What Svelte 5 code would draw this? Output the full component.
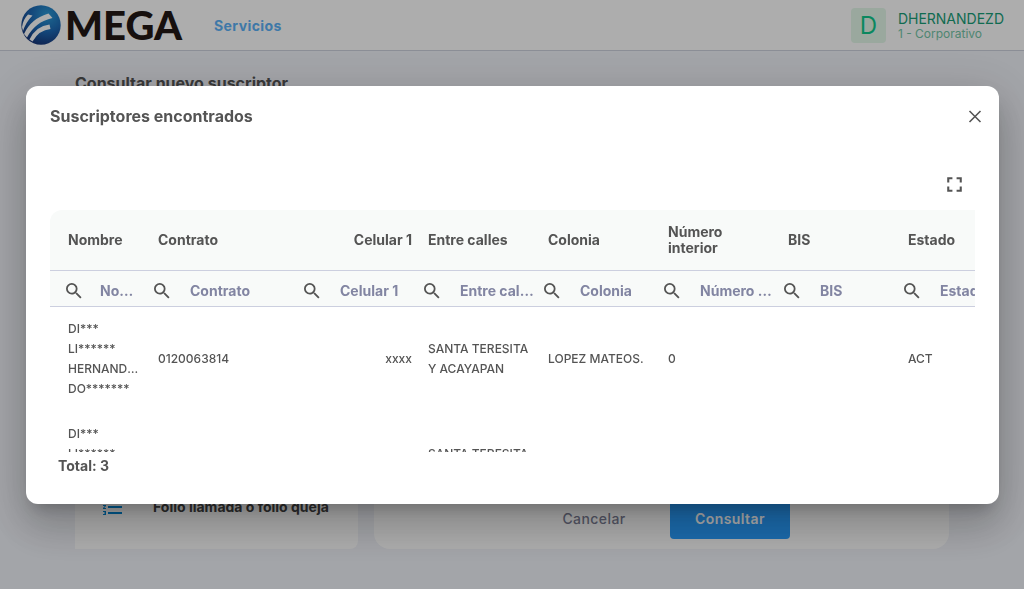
<script>
  const columns = [
    { key: 'nombre', label: 'Nombre', width: 100 },
    { key: 'contrato', label: 'Contrato', width: 150 },
    { key: 'celular', label: 'Celular 1', width: 120, right: true },
    { key: 'calles', label: 'Entre calles', width: 120 },
    { key: 'colonia', label: 'Colonia', width: 120 },
    { key: 'numero', label: 'Número interior', width: 120 },
    { key: 'bis', label: 'BIS', width: 120 },
    { key: 'estado', label: 'Estado', width: 120 }
  ];

  const rows = [
    {
      nombre: ['DI***', 'LI******', 'HERNANDEZ', 'DO*******'],
      contrato: ['0120063814'],
      celular: ['xxxx'],
      calles: ['SANTA TERESITA', 'Y ACAYAPAN'],
      colonia: ['LOPEZ MATEOS.'],
      numero: ['0'],
      bis: [],
      estado: ['ACT']
    },
    {
      nombre: ['DI***', 'LI******', 'HERNANDEZ', 'DO*******'],
      contrato: ['0120063814'],
      celular: ['xxxx'],
      calles: ['SANTA TERESITA', 'Y ACAYAPAN'],
      colonia: ['LOPEZ MATEOS.'],
      numero: ['0'],
      bis: [],
      estado: ['ACT']
    }
  ];
</script>

<div class="page">
  <header>
    <div class="brand">
      <svg viewBox="0 0 40 40" width="40" height="40" aria-hidden="true">
        <defs>
          <radialGradient id="globe" cx="0.66" cy="0.24" r="0.85">
            <stop offset="0" stop-color="#2c9ad6" />
            <stop offset="0.5" stop-color="#1c68b4" />
            <stop offset="1" stop-color="#172f70" />
          </radialGradient>
        </defs>
        <circle cx="20" cy="20" r="19.7" fill="url(#globe)" />
        <g fill="#fff">
          <path d="M7 9.500 11.500 10.500Q5 17 2 26L1 22Q2 14.500 7 9.500Z" />
          <path d="M3 29Q10 13.500 27.500 8.500L31.500 13Q14 17 6 32.500Z" />
          <path d="M8.500 34.500Q15 21 28.500 19.500L29.500 24Q18 25 11.500 36.500Z" />
        </g>
      </svg>
      <span class="wordmark">MEGA</span>
    </div>
    <nav><a href="#servicios">Servicios</a></nav>
    <div class="user">
      <span class="avatar">D</span>
      <div class="account">
        <div class="login">DHERNANDEZD</div>
        <div class="office">1 - Corporativo</div>
      </div>
    </div>
  </header>

  <main>
    <h1>Consultar nuevo suscriptor</h1>
    <div class="cards">
      <section class="options">
        <a href="#folio">
          <svg viewBox="0 0 24 24" width="24" height="24" aria-hidden="true">
            <path fill="#0088d8" d="M2 17h2v.5H3v1h1v.5H2v1h3v-4H2v1zm1-9h1V4H2v1h1v3zm-1 3h1.800L2 13.100v.9h3v-1H3.200L5 10.900V10H2v1zm5-6v2h14V5H7zm0 14h14v-2H7v2zm0-6h14v-2H7v2z" />
          </svg>
          <span>Folio llamada o folio queja</span>
        </a>
      </section>
      <section class="form">
        <button type="button" class="cancel">Cancelar</button>
        <button type="button" class="submit">Consultar</button>
      </section>
    </div>
  </main>
</div>

<div class="backdrop">
  <div class="dialog" role="dialog" aria-modal="true" aria-labelledby="dialog-title">
    <div class="title-row">
      <h2 id="dialog-title">Suscriptores encontrados</h2>
      <button type="button" class="icon-button" aria-label="Cerrar">
        <svg viewBox="0 0 20 20" width="20" height="20"><path d="M4.500 5 15.500 16M15.500 5 4.500 16" fill="none" stroke="#545454" stroke-width="1.600" /></svg>
      </button>
    </div>
    <div class="toolbar">
      <button type="button" class="icon-button" aria-label="Pantalla completa">
        <svg viewBox="0 0 24 24" width="25" height="25"><path fill="#545454" d="M7 14H5v5h5v-2H7v-3zm-2-4h2V7h3V5H5v5zm12 7h-3v2h5v-5h-2v3zM14 5v2h3v3h2V5h-5z" /></svg>
      </button>
    </div>
    <div class="grid">
      <table>
        <colgroup>
          {#each columns as column}
            <col style:width="{column.width}px" />
          {/each}
        </colgroup>
        <thead>
          <tr class="labels">
            {#each columns as column}
              <th scope="col" class:right={column.right}>{column.label}</th>
            {/each}
          </tr>
          <tr class="filters">
            {#each columns as column}
              <td>
                <label>
                  <svg viewBox="3 3 18 18" width="16" height="16" aria-hidden="true"><path fill="#545454" d="M15.500 14h-.79l-.28-.27A6.471 6.471 0 0 0 16 9.500 6.500 6.500 0 1 0 9.500 16c1.610 0 3.090-.59 4.230-1.570l.27.28v.79l5 4.990L20.490 19l-4.990-5zm-6 0C7.010 14 5 11.990 5 9.500S7.010 5 9.500 5 14 7.010 14 9.500 11.990 14 9.500 14z" /></svg>
                  <input type="text" placeholder={column.label} aria-label={column.label} />
                </label>
              </td>
            {/each}
          </tr>
        </thead>
        <tbody>
          {#each rows as row}
            <tr>
              {#each columns as column}
                <td class:right={column.right}>
                  {#each row[column.key] as line}
                    <div class="line">{line}</div>
                  {/each}
                </td>
              {/each}
            </tr>
          {/each}
        </tbody>
      </table>
    </div>
    <p class="total">Total: 3</p>
  </div>
</div>

<style>
  :global(body) {
    margin: 0;
    background: #f1f3f9;
    font-family: Inter, 'Liberation Sans', sans-serif;
    color: #545454;
  }
  :global(*) {
    box-sizing: border-box;
  }
  button,
  input {
    font: inherit;
    border: 0;
    background: none;
    padding: 0;
  }
  svg {
    display: block;
    flex: none;
  }
  a {
    text-decoration: none;
  }
  .page {
    height: 100vh;
    display: flex;
    flex-direction: column;
    overflow: hidden;
  }
  header {
    display: flex;
    align-items: center;
    height: 51px;
    padding: 0 20px 0 21px;
    background: #fff;
    border-bottom: 1px solid #cdd1de;
  }
  .brand {
    display: flex;
    align-items: center;
    gap: 4px;
    width: 193px;
  }
  .wordmark {
    font: 900 40px/48px Lato, sans-serif;
    color: #231815;
  }
  nav {
    flex: 1;
    font-size: 14px;
    font-weight: 700;
    letter-spacing: 0.03em;
  }
  nav a {
    color: #5cb2f8;
  }
  .user {
    display: flex;
    align-items: center;
    gap: 12px;
  }
  .avatar {
    width: 35px;
    height: 35px;
    border-radius: 4px;
    background: #e3f8e9;
    color: #10c98c;
    font-size: 24px;
    line-height: 35px;
    text-align: center;
  }
  .account {
    padding-top: 2px;
  }
  .login {
    font-size: 14px;
    line-height: 16px;
    color: #189e78;
  }
  .office {
    font-size: 12px;
    line-height: 14px;
    color: #74c6a8;
  }
  main {
    flex: 1;
    display: flex;
    flex-direction: column;
    gap: 16px;
    padding: 20px 75px 40px;
  }
  h1,
  h2 {
    margin: 0;
    font-size: 16px;
    line-height: 24px;
    font-weight: 700;
  }
  .cards {
    flex: 1;
    display: grid;
    grid-template-columns: 283fr 575fr;
    gap: 16px;
  }
  .cards section {
    display: flex;
    align-items: flex-end;
    background: #fff;
  }
  .options {
    padding: 28px 26px;
    border-radius: 0 8px 8px 0;
  }
  .options a {
    display: flex;
    align-items: center;
    gap: 28px;
    color: #444;
    font-size: 14px;
    line-height: 28px;
    font-weight: 700;
  }
  .form {
    justify-content: flex-end;
    gap: 16px;
    padding: 10px 159px 10px 0;
    border-radius: 16px;
  }
  .form button {
    height: 42px;
    width: 120px;
    border-radius: 4px;
    font-size: 14px;
    font-weight: 500;
    letter-spacing: 0.03em;
  }
  .form .cancel {
    color: #7d7f96;
  }
  .form .submit {
    background: #289eff;
    color: #fff;
    font-weight: 600;
  }
  .backdrop {
    position: fixed;
    inset: 0;
    display: flex;
    align-items: center;
    justify-content: center;
    padding: 0 25px 0 26px;
    background: rgba(0, 0, 0, 0.32);
  }
  .dialog {
    width: 100%;
    padding: 18px 24px 28px;
    border-radius: 12px;
    background: #fff;
    box-shadow:
      0 11px 15px -7px rgba(0, 0, 0, 0.2),
      0 24px 38px 3px rgba(0, 0, 0, 0.14),
      0 9px 46px 8px rgba(0, 0, 0, 0.12);
  }
  .title-row {
    display: flex;
    justify-content: space-between;
    margin-right: -10px;
  }
  .icon-button {
    display: flex;
    align-items: center;
    color: #545454;
  }
  .toolbar {
    display: flex;
    justify-content: flex-end;
    padding: 44px 8px 13px;
  }
  .grid {
    height: 242px;
    overflow: hidden;
    border-radius: 12px 0 0 0;
  }
  table {
    width: 970px;
    table-layout: fixed;
    border-collapse: separate;
    border-spacing: 0;
  }
  thead {
    background: #f8faf9;
  }
  th,
  td {
    padding: 0 8px;
    text-align: left;
  }
  th {
    height: 61px;
    font-size: 14px;
    line-height: 16px;
    font-weight: 700;
    border-bottom: 1px solid #cccfdf;
  }
  th:first-child,
  tbody td:first-child {
    padding-left: 18px;
  }
  th.right,
  td.right {
    text-align: right;
  }
  .filters td {
    height: 36px;
    padding: 5px 6px 0 4px;
    border-bottom: 1px solid #cccfdf;
  }
  .filters td:first-child {
    padding-left: 16px;
  }
  label {
    display: flex;
    align-items: center;
    gap: 20px;
  }
  td:first-child label {
    gap: 18px;
  }
  input {
    min-width: 0;
    width: 100%;
    font-size: 14px;
    line-height: 20px;
    font-weight: 700;
    text-overflow: ellipsis;
  }
  input::placeholder {
    color: #8285a2;
    opacity: 1;
  }
  tbody td {
    height: 105px;
    font-size: 12px;
    line-height: 20px;
    font-weight: 500;
  }
  .line {
    overflow: hidden;
    text-overflow: ellipsis;
    white-space: nowrap;
  }
  .total {
    margin: 0;
    padding: 4px 8px 0;
    font-size: 14px;
    line-height: 20px;
    font-weight: 700;
  }
</style>
